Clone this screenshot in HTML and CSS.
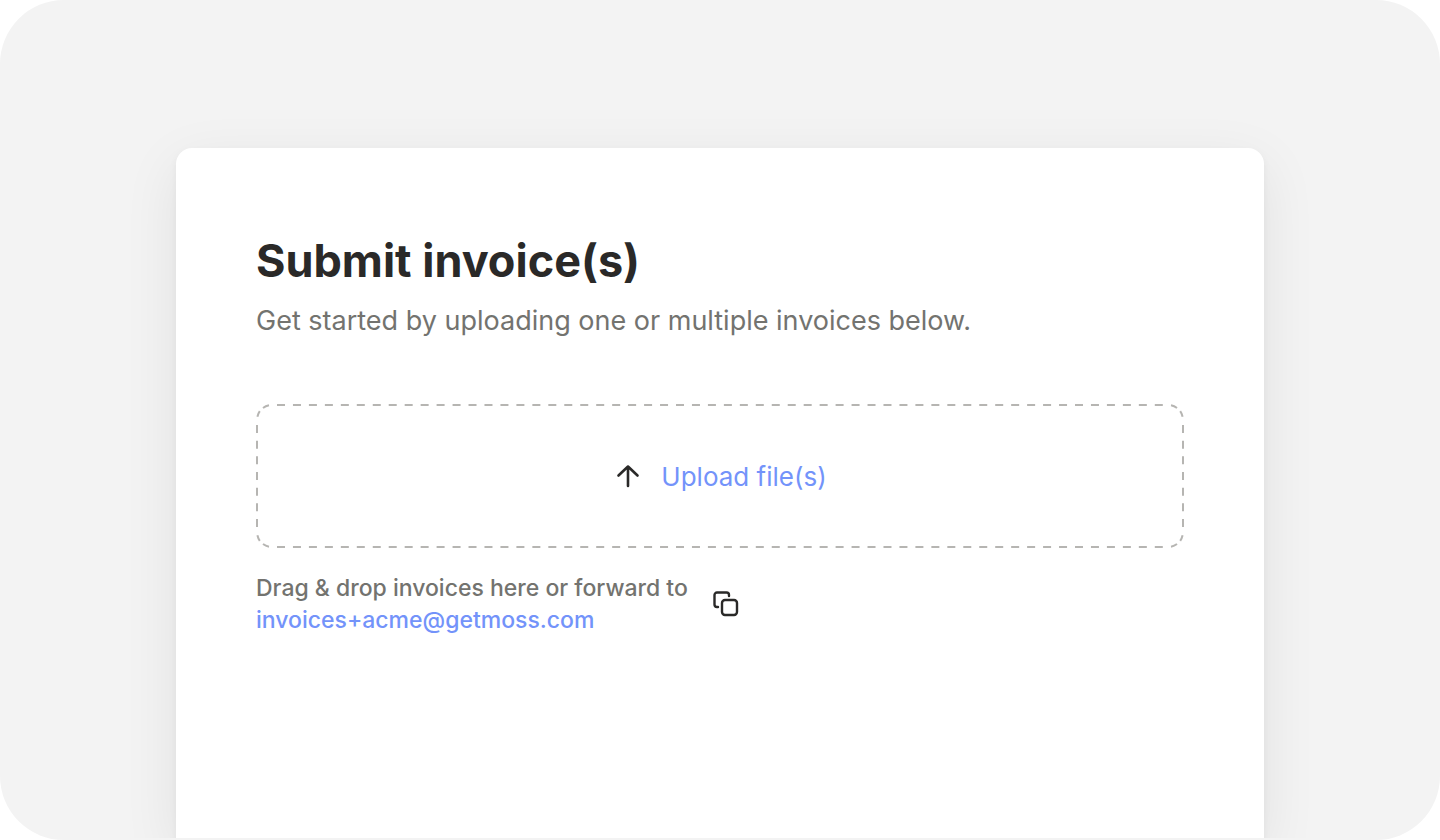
FILE: index.html
```
<!DOCTYPE html>
<html lang="en">
<head>
    <meta charset="UTF-8">
    <meta name="viewport" content="width=device-width, initial-scale=1.0">
    <title>Submit invoice(s)</title>
    <link rel="stylesheet" href="styles.css">
</head>
<body>
    <div class="stage">
        <main class="card">
            <h1>Submit invoice(s)</h1>
            <p class="intro">Get started by uploading one or multiple invoices below.</p>

            <button type="button" class="dropzone">
                <!-- dashed outline -->
                <svg class="outline" viewBox="0 0 928 144" preserveAspectRatio="none" aria-hidden="true">
                    <path d="M21 1H907M21 143H907" stroke-dasharray="8 7.96"/>
                    <path d="M1 21V123M927 21V123" stroke-dasharray="8 7.67"/>
                    <path d="M7 4A15 15 0 0 1 13 1.3M1.4 12.7A15 15 0 0 1 3.8 7.2M921 4A15 15 0 0 0 915 1.3M926.6 12.7A15 15 0 0 0 924.2 7.2"/>
                    <path d="M7 140A15 15 0 0 0 13 142.7M1.4 131.3A15 15 0 0 0 3.8 136.8M921 140A15 15 0 0 1 915 142.7M926.6 131.3A15 15 0 0 1 924.2 136.8"/>
                </svg>
                <svg class="arrow" viewBox="0 0 32 32" aria-hidden="true">
                    <path d="M15 26V6.5M5.500 15.500L15 6.500L24.500 15.500"/>
                </svg>
                <span>Upload file(s)</span>
            </button>

            <div class="forward">
                <p>Drag &amp; drop invoices here or forward to<br>
                <a href="mailto:invoices+acme@getmoss.com">invoices+acme@getmoss.com</a></p>
                <button type="button" class="copy" aria-label="Copy email address">
                    <svg viewBox="0 0 28 28" aria-hidden="true">
                        <rect x="10" y="10" width="15" height="15" rx="3"/>
                        <path d="M17 6V5A2.500 2.500 0 0 0 14.500 2.500H5A2.500 2.500 0 0 0 2.500 5V14.500A2.500 2.500 0 0 0 5 17H6"/>
                    </svg>
                </button>
            </div>
        </main>
    </div>
</body>
</html>
```

FILE: styles.css
```
* { box-sizing: border-box; }
body { margin: 0; background: #fff; color: #2a2928; font-family: Inter, "Liberation Sans", sans-serif; }
.stage { display: flex; min-height: 100vh; padding: 148px 176px 2px; background: #f3f3f3; border-radius: 64px; overflow: hidden; }
.card { flex: 1; padding: 80px; background: #fff; border-radius: 16px 16px 0 0; box-shadow: 0 4px 8px rgba(0,0,0,0.05), 0 16px 56px rgba(0,0,0,0.08); clip-path: inset(-100px -100px 0); }
h1 { margin: 0; font-size: 45px; line-height: 66px; font-weight: 700; }
.intro { margin: 4px 0 60px; font-size: 27px; line-height: 46px; color: #73736f; }
button { padding: 0; border: 0; background: none; font-family: inherit; cursor: pointer; }
.dropzone { position: relative; display: flex; align-items: center; justify-content: center; gap: 16px; width: 100%; height: 144px; font-size: 26px; color: #7393fa; }
svg { display: block; fill: none; stroke: #2a2928; }
.outline { position: absolute; inset: 0; width: 100%; height: 100%; stroke: #b6b5b2; stroke-width: 2; }
.arrow { width: 32px; height: 32px; stroke-width: 2.6; stroke-linecap: round; stroke-linejoin: round; }
.forward { display: flex; align-items: center; gap: 24px; margin-top: 24px; }
.forward p { margin: 0; font-size: 23px; line-height: 32px; font-weight: 500; color: #73736f; }
.forward a { color: #7393fa; text-decoration: none; }
.copy svg { width: 28px; height: 28px; stroke-width: 2.4; stroke-linecap: round; stroke-linejoin: round; }
```
